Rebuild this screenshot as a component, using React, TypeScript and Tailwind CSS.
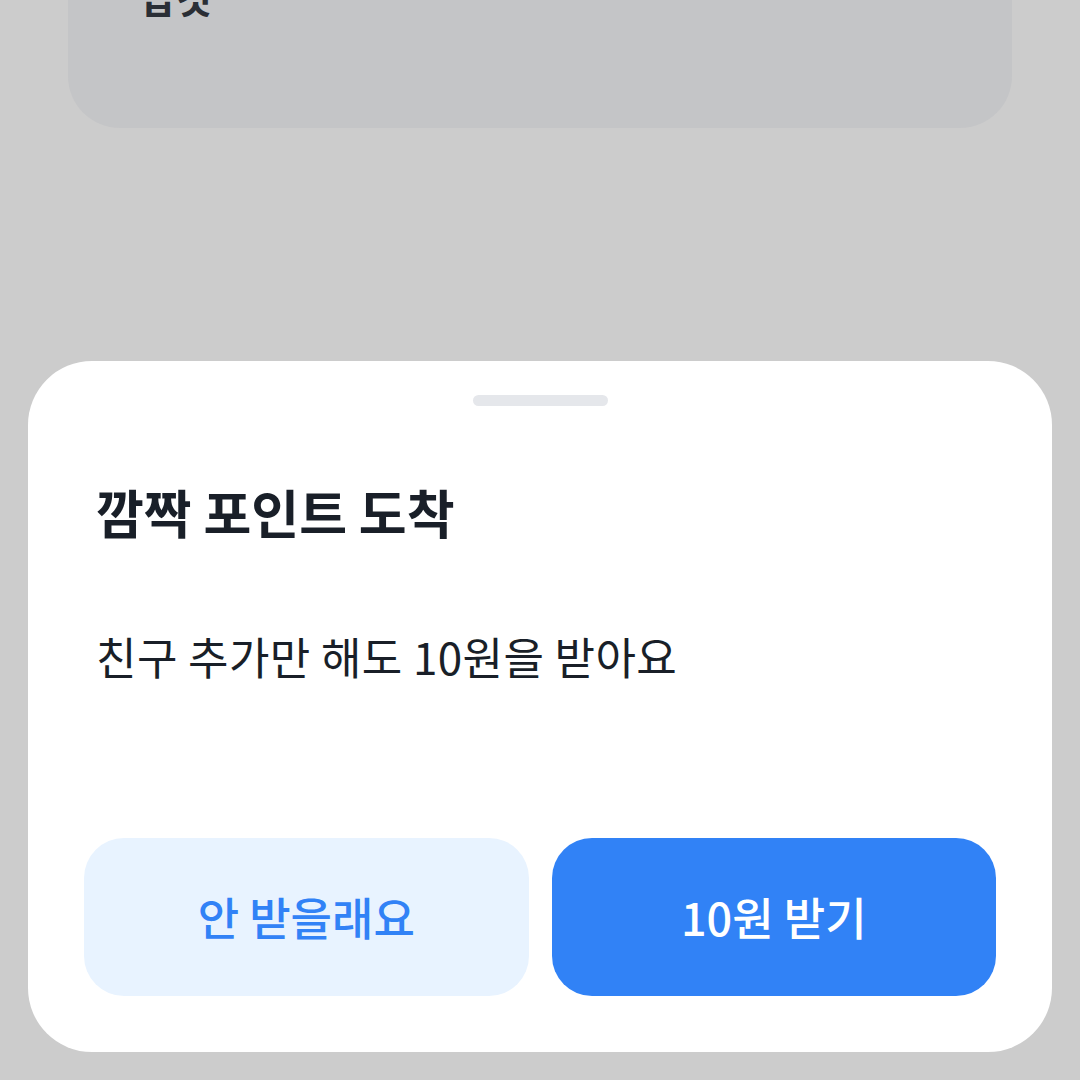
import React from 'react';

const font = { fontFamily: '"Noto Sans CJK KR", "Noto Sans", sans-serif' };

const App = () => {
  return (
    <div className="w-[1080px] h-[1080px] bg-[#cccccc] overflow-hidden flex flex-col" style={font}>
      {/* background card, scrolled off the top */}
      <div className="mx-[68px] h-[128px] bg-[#c4c5c7] rounded-b-[52px] flex flex-col justify-end overflow-hidden">
        <div className="px-[72px] pb-[108px] text-[39px] leading-[48px] font-bold text-[#2a2e35]">답것</div>
      </div>

      {/* bottom sheet */}
      <div className="mt-[233px] mx-[28px] h-[691px] bg-white rounded-[64px] flex flex-col px-[56px]">
        <div className="mt-[34px] self-center w-[135px] h-[11px] rounded-full bg-[#e5e7eb]" />

        <h1 className="mt-[75px] text-[52px] leading-[62px] font-bold text-[#191f28] px-[12px]">깜짝 포인트 도착</h1>

        <p className="mt-[85px] text-[44px] leading-[56px] tracking-[0.4px] text-[#191f28] px-[12px]">친구 추가만 해도 10원을 받아요</p>

        <div className="mt-auto mb-[56px] grid grid-cols-2 gap-[23px]">
          <button className="h-[158px] rounded-[40px] bg-[#e8f3ff] text-[#3182f6] text-[45px] font-medium">안 받을래요</button>
          <button className="h-[158px] rounded-[40px] bg-[#3182f6] text-white text-[45px] font-medium">10원 받기</button>
        </div>
      </div>
    </div>
  );
};

export default App;
